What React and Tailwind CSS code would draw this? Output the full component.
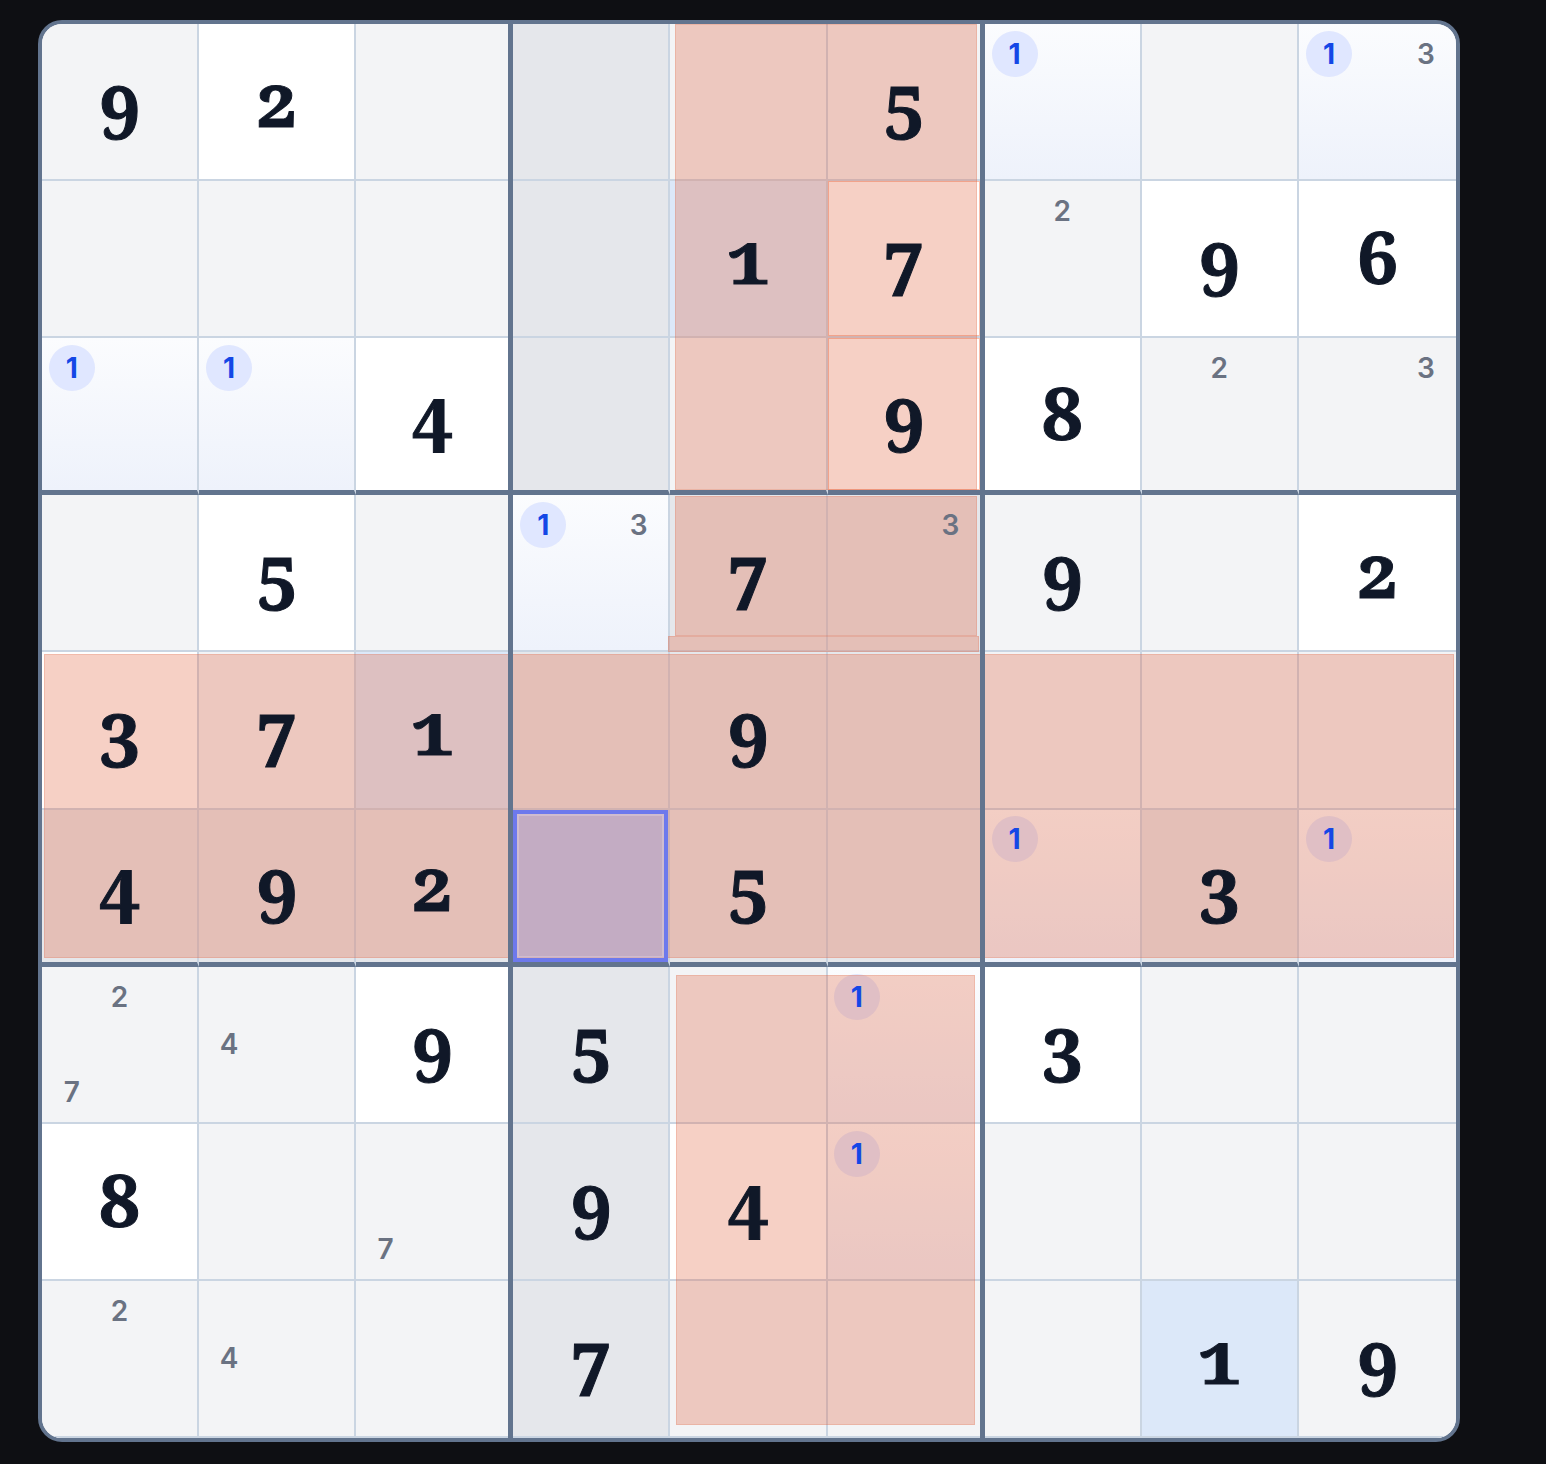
import React from "react";

// cell backgrounds: W white, P white cell inside the hint area, G gray, D peer (darker gray),
// L candidate gradient, U same-digit blue, S selected
const BG = {
  W: "bg-white",
  P: "bg-white shadow-[inset_0_0_0_1px_#f9bfac]",
  G: "bg-gray-100",
  D: "bg-gray-200",
  L: "bg-linear-to-b from-[#fbfcfe] to-[#eef2fb]",
  U: "bg-[#dce8f9]",
  S: "bg-[#b7ccfc]",
};

// value: number = placed digit, array = pencil marks, null = empty
const board = [
  [["G", 9], ["W", 2], ["G", null], ["D", null], ["G", null], ["G", 5], ["L", [1]], ["G", null], ["L", [1, 3]]],
  [["G", null], ["G", null], ["G", null], ["D", null], ["U", 1], ["P", 7], ["G", [2]], ["W", 9], ["W", 6]],
  [["L", [1]], ["L", [1]], ["W", 4], ["D", null], ["G", null], ["P", 9], ["W", 8], ["G", [2]], ["G", [3]]],
  [["G", null], ["W", 5], ["G", null], ["L", [1, 3]], ["D", 7], ["D", [3]], ["G", 9], ["G", null], ["W", 2]],
  [["W", 3], ["G", 7], ["U", 1], ["D", null], ["D", 9], ["D", null], ["G", null], ["G", null], ["G", null]],
  [["D", 4], ["D", 9], ["D", 2], ["S", null], ["D", 5], ["D", null], ["L", [1]], ["D", 3], ["L", [1]]],
  [["G", [2, 7]], ["G", [4]], ["W", 9], ["D", 5], ["G", null], ["L", [1]], ["W", 3], ["G", null], ["G", null]],
  [["W", 8], ["G", null], ["G", [7]], ["D", 9], ["W", 4], ["L", [1]], ["G", null], ["G", null], ["G", null]],
  [["G", [2]], ["G", [4]], ["G", null], ["D", 7], ["G", null], ["G", null], ["G", null], ["U", 1], ["G", 9]],
];

// hint highlight rectangles, in px from the inner top-left of the board
const overlays = [
  { id: "box-col-top", cls: "left-[633px] top-0 w-[302px] h-[466px]" },
  { id: "box-col-mid", cls: "left-[633px] top-[472px] w-[302px] h-[140px]" },
  { id: "box-col-strip", cls: "left-[626px] top-[612px] w-[311px] h-[16px]" },
  { id: "row-band", cls: "left-[2px] top-[630px] w-[1410px] h-[304px]" },
  { id: "box-col-bottom", cls: "left-[634px] top-[951px] w-[299px] h-[450px]" },
];

function Marks({ marks }) {
  return (
    <div className="grid grid-cols-3 grid-rows-3 size-full p-[6px]">
      {[1, 2, 3, 4, 5, 6, 7, 8, 9].map((n) => (
        <div key={n} className="flex items-center justify-center">
          {marks.includes(n) &&
            (n === 1 ? (
              <span className="flex size-[46px] items-center justify-center rounded-full bg-indigo-100">
                <span className="relative z-20 font-['Inter',sans-serif] text-[28px] font-bold leading-none text-blue-700">1</span>
              </span>
            ) : (
              <span className="relative z-20 font-['Inter',sans-serif] text-[28px] font-semibold leading-none text-gray-500">{n}</span>
            ))}
        </div>
      ))}
    </div>
  );
}

function Cell({ r, c, bg, value }) {
  const right =
    c === 8 ? "" : c === 2 || c === 5 ? "border-r-[5px] border-r-slate-500" : "border-r-2 border-r-slate-300";
  const bottom = r === 2 || r === 5 ? "border-b-[5px] border-b-slate-500" : "border-b-2 border-b-slate-300";
  return (
    <div className={`relative flex items-center justify-center ${right} ${bottom} ${BG[bg]}`}>
      {typeof value === "number" && (
        <span className="relative z-20 mb-[6px] font-['Noto_Serif',serif] text-[73px] font-bold leading-none oldstyle-nums text-gray-900 [-webkit-text-stroke:1px_#111827]">
          {value}
        </span>
      )}
      {Array.isArray(value) && <Marks marks={value} />}
      {bg === "S" && (
        <div className="absolute inset-0 z-30 border-4 border-[#6d79ec] shadow-[inset_0_0_0_2px_rgba(255,255,255,0.2)]" />
      )}
    </div>
  );
}

export default function App() {
  return (
    <div className="min-h-screen bg-[#0e0f13] pl-[38px] pt-[20px]">
      <div className="relative isolate size-[1422px] overflow-hidden rounded-[24px] border-4 border-slate-500 bg-gray-100">
        <div className="grid size-full grid-cols-9 grid-rows-9">
          {board.map((row, r) => row.map(([bg, value], c) => <Cell key={`${r}-${c}`} r={r} c={c} bg={bg} value={value} />))}
        </div>
        {overlays.map((o) => (
          <div key={o.id} className={`pointer-events-none absolute z-10 border border-[#e2643f]/20 bg-[#e2643f]/30 ${o.cls}`} />
        ))}
        <div className="pointer-events-none absolute inset-y-0 left-[calc(33.3333%-5px)] z-30 w-[5px] bg-slate-500" />
        <div className="pointer-events-none absolute inset-y-0 left-[calc(66.6667%-5px)] z-30 w-[5px] bg-slate-500" />
      </div>
    </div>
  );
}
